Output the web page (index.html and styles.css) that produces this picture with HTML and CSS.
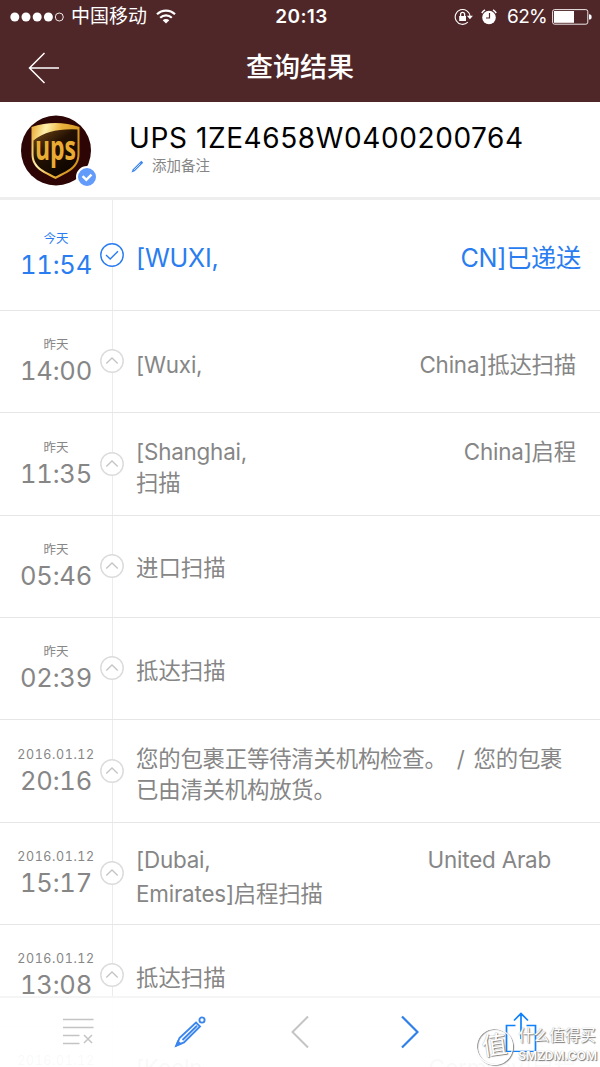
FILE: index.html
```html
<!DOCTYPE html>
<html lang="zh-CN">
<head>
  <meta charset="UTF-8" />
  <meta name="viewport" content="width=device-width, initial-scale=1.0"/>
  <title>查询结果</title>
  <link rel="stylesheet" href="styles.css">
</head>
<body>
  <svg class="defs" width="0" height="0">
    <symbol id="icon-up" viewBox="0 0 24 24">
      <circle cx="12" cy="12" r="11.2" fill="#fff" stroke="#dcdcdc" stroke-width="1.5"/>
      <path d="M6.300 14.500L12 9l5.700 5.500" fill="none" stroke="#c4c4c4" stroke-width="1.300"/>
    </symbol>
    <symbol id="icon-check" viewBox="0 0 24 24">
      <circle cx="12" cy="12" r="11.2" fill="#fff" stroke="#2a7df0" stroke-width="1.400"/>
      <path d="M6 12l4.200 4L18 8.200" fill="none" stroke="#2a7df0" stroke-width="1.400"/>
    </symbol>
  </svg>

  <header>
    <div class="status-bar">
      <div class="status-left">
        <svg width="54" height="10" viewBox="0 0 54 10" fill="#fff">
          <circle cx="4.800" cy="5" r="4.500"/>
          <circle cx="16" cy="5" r="4.500"/>
          <circle cx="27.200" cy="5" r="4.500"/>
          <circle cx="38.400" cy="5" r="4.500"/>
          <circle cx="49.300" cy="5" r="4" fill="none" stroke="#fff" stroke-width="0.9"/>
        </svg>
        <span class="carrier">中国移动</span>
        <svg class="wifi" width="20" height="15" viewBox="0 0 20 15" fill="none" stroke="#fff" stroke-width="2.200">
          <path d="M1 5.300a12.800 12.800 0 0 1 18 0"/>
          <path d="M4.200 8.700a8.300 8.300 0 0 1 11.600 0"/>
          <path d="M10 14.600L6.700 11.300a4.700 4.700 0 0 1 6.600 0z" fill="#fff" stroke="none"/>
        </svg>
      </div>
      <div class="clock">20:13</div>
      <div class="status-right">
        <svg width="19" height="18" viewBox="0 0 19 18" fill="none" stroke="#fff" stroke-width="1.100">
          <path d="M13.800 14.200A7.400 7.400 0 1 1 16 8.500"/>
          <path d="M12.900 7.700h6l-3 3.600z" fill="#fff" stroke="none"/>
          <rect x="5.200" y="8" width="6.800" height="5" fill="#fff" stroke="none"/>
          <path d="M6.600 8V6.300a2 2 0 0 1 4 0V8" stroke-width="1.300"/>
        </svg>
        <svg class="alarm" width="16" height="16" viewBox="0 0 16 16" fill="none" stroke="#fff">
          <circle cx="8" cy="8.500" r="6.800" fill="#fff" stroke="none"/>
          <path d="M0.800 4A9 9 0 0 1 4 .9M12 .9A9 9 0 0 1 15.200 4" stroke-width="1.500"/>
          <path d="M8.500 4v5H5" stroke="#4f2729" stroke-width="1.200"/>
        </svg>
        <span class="percent">62%</span>
        <svg width="40" height="16" viewBox="0 0 40 16">
          <rect x="0.600" y="0.600" width="35.200" height="14.600" rx="2" fill="none" stroke="#fff" stroke-width="0.900"/>
          <rect x="2" y="2" width="20" height="11.800" fill="#fff"/>
          <path d="M37 5.300a2.600 2.600 0 0 1 0 5.300z" fill="#fff"/>
        </svg>
      </div>
    </div>
    <div class="title-bar">
      <svg class="back" width="32" height="32" viewBox="0 0 32 32" fill="none" stroke="#fff" stroke-width="1.500">
        <path d="M16.500 1L1.500 16l15 15M1.500 16H31"/>
      </svg>
      <h1>查询结果</h1>
    </div>
  </header>

  <section class="parcel">
    <div class="parcel-logo">
      <svg width="70" height="71" viewBox="0 0 70 71">
        <defs>
          <linearGradient id="gold" x1="0" y1="0" x2="1" y2="0.300">
            <stop offset="0" stop-color="#e7a52b"/>
            <stop offset="0.300" stop-color="#fff0ac"/>
            <stop offset="0.600" stop-color="#e9b13c"/>
            <stop offset="1" stop-color="#d3941d"/>
          </linearGradient>
          <linearGradient id="brown" x1="0" y1="0" x2="0.700" y2="1">
            <stop offset="0" stop-color="#7a4d17"/>
            <stop offset="0.450" stop-color="#241103"/>
            <stop offset="1" stop-color="#0c0500"/>
          </linearGradient>
        </defs>
        <circle cx="35" cy="35.500" r="35" fill="#2d0505"/>
        <path d="M10.500 12Q34.500 4 58.500 12V39C58.500 53 48 57 34.500 64C21 57 10.500 53 10.500 39z" fill="url(#gold)"/>
        <path d="M12.500 25.500Q28 13 56.500 14.500V39C56.500 51.500 46.500 55.500 34.500 61.500C22.500 55.500 12.500 51.500 12.500 39z" fill="url(#brown)"/>
        <text x="14" y="45" textLength="41" lengthAdjust="spacingAndGlyphs" class="logo-text">ups</text>
      </svg>
      <svg class="verified" width="22" height="22" viewBox="0 0 22 22">
        <circle cx="11" cy="11" r="10" fill="#639bfb" stroke="#fff" stroke-width="2"/>
        <path d="M6.600 10.200l3.700 3.700 5.200-5.200" fill="none" stroke="#fff" stroke-width="2.400"/>
      </svg>
    </div>
    <div class="parcel-info">
      <div class="parcel-number">UPS 1ZE4658W0400200764</div>
      <div class="parcel-note">
        <svg width="13" height="13" viewBox="0 0 13 13">
          <path d="M.5 12.500L1.800 9.300 10.300.8l1.900 1.900L3.700 11.200z" fill="#3b86ee"/>
          <path d="M2.900 10.100L9.300 3.700" stroke="#fff" stroke-width="0.700"/>
        </svg>
        <span>添加备注</span>
      </div>
    </div>
  </section>

  <main class="timeline">
    <div class="event latest">
      <div class="when"><span class="day">今天</span><span class="time">11:54</span></div>
      <svg class="node"><use href="#icon-check"/></svg>
      <div class="message"><div class="split"><span>[WUXI,</span><span>CN]已递送</span></div></div>
    </div>
    <div class="event">
      <div class="when"><span class="day">昨天</span><span class="time">14:00</span></div>
      <svg class="node"><use href="#icon-up"/></svg>
      <div class="message"><div class="split"><span>[Wuxi,</span><span>China]抵达扫描</span></div></div>
    </div>
    <div class="event">
      <div class="when"><span class="day">昨天</span><span class="time">11:35</span></div>
      <svg class="node"><use href="#icon-up"/></svg>
      <div class="message"><div class="split"><span>[Shanghai,</span><span>China]启程</span></div><div>扫描</div></div>
    </div>
    <div class="event">
      <div class="when"><span class="day">昨天</span><span class="time">05:46</span></div>
      <svg class="node"><use href="#icon-up"/></svg>
      <div class="message single">进口扫描</div>
    </div>
    <div class="event">
      <div class="when"><span class="day">昨天</span><span class="time">02:39</span></div>
      <svg class="node"><use href="#icon-up"/></svg>
      <div class="message single">抵达扫描</div>
    </div>
    <div class="event">
      <div class="when"><span class="day date">2016.01.12</span><span class="time">20:16</span></div>
      <svg class="node"><use href="#icon-up"/></svg>
      <div class="message"><div>您的包裹正等待清关机构检查。<span class="slash">/</span>您的包裹</div><div>已由清关机构放货。</div></div>
    </div>
    <div class="event">
      <div class="when"><span class="day date">2016.01.12</span><span class="time">15:17</span></div>
      <svg class="node"><use href="#icon-up"/></svg>
      <div class="message loose"><div class="split short"><span>[Dubai,</span><span>United Arab</span></div><div>Emirates]启程扫描</div></div>
    </div>
    <div class="event">
      <div class="when"><span class="day date">2016.01.12</span><span class="time">13:08</span></div>
      <svg class="node"><use href="#icon-up"/></svg>
      <div class="message single">抵达扫描</div>
    </div>
    <div class="event last">
      <div class="when"><span class="day date">2016.01.12</span></div>
      <div class="message"><div class="split"><span>[Koeln,</span><span>Germany]启程</span></div></div>
    </div>
  </main>

  <nav class="toolbar">
    <svg class="list" width="32" height="28" viewBox="0 0 32 28" fill="none" stroke="#c4c4c4" stroke-width="1.500">
      <path d="M1 1.500H31.500M1 9.500H31.500M1 17.500H17.500M1 25.500H17.500M22 17l8 8M30 17l-8 8"/>
    </svg>
    <svg class="pencil" width="32" height="32" viewBox="0 0 32 32" fill="none" stroke="#3b86ee" stroke-width="1.900">
      <path d="M2.500 29.500l3-7.500L22 6.500l4 4L10 26.500zM8.500 24L23 9.800"/>
      <circle cx="28" cy="4" r="2.600"/>
      <path d="M.5 31.500l3-7.500 4.500 4z" fill="#3b86ee" stroke="none"/>
    </svg>
    <svg class="prev" width="18" height="34" viewBox="0 0 18 34" fill="none" stroke="#c4c4c4" stroke-width="2">
      <path d="M17 1.500L1.500 17 17 32.500"/>
    </svg>
    <svg class="next" width="18" height="34" viewBox="0 0 18 34" fill="none" stroke="#2f80ea" stroke-width="2.200">
      <path d="M1 1.500L16.500 17 1 32.500"/>
    </svg>
    <svg class="share" width="32" height="40" viewBox="0 0 32 40" fill="none" stroke="#1181fb" stroke-width="1.700">
      <path d="M10.500 13.500H1.500v26h29v-26h-9M16 27V1.500M9 8.500l7-7 7 7"/>
    </svg>
  </nav>

  <div class="watermark">
    <span class="seal">值</span>
    <div class="mark-text"><span>什么值得买</span><span class="domain">SMZDM.COM</span></div>
  </div>
</body>
</html>
```
FILE: styles.css
```css
html, body {
  margin: 0;
  padding: 0;
  height: 100%;
  overflow: hidden;
}

body {
  position: relative;
  background: #fff;
  font-family: Inter, 'Noto Sans CJK SC', sans-serif;
  color: #868686;
}

* {
  box-sizing: border-box;
}

svg {
  display: block;
  flex: none;
}

.defs {
  position: absolute;
}

/* Header */
header {
  height: 102px;
  background: #4f2729;
  color: #fff;
}
.status-bar {
  display: grid;
  grid-template-columns: 1fr auto 1fr;
  align-items: center;
  height: 33px;
  padding: 0 8px 0 10px;
}
.status-left, .status-right {
  display: flex;
  align-items: center;
}
.status-right {
  justify-content: flex-end;
}
.carrier {
  margin-left: 7px;
  font-size: 19px;
  line-height: 30px;
}
.wifi {
  margin-left: 9px;
}
.clock {
  padding-left: 1px;
  font-size: 19px;
  font-weight: 600;
  letter-spacing: 0.4px;
}
.alarm {
  margin-left: 8px;
}
.percent {
  margin: 0 5px 0 10px;
  font-size: 19px;
  letter-spacing: -0.7px;
}
.title-bar {
  display: flex;
  align-items: center;
  height: 69px;
  padding: 0 28px;
}
.title-bar h1 {
  flex: 1;
  margin: 0 32px 0 0;
  font-size: 27px;
  font-weight: 500;
  line-height: 40px;
  text-align: center;
}

/* Parcel summary */
.parcel {
  display: flex;
  height: 98px;
  padding: 13px 0 0 21px;
  border-bottom: 3px solid #eee;
}
.parcel-logo {
  position: relative;
  width: 70px;
  height: 71px;
}
.logo-text {
  font-family: 'Open Sans', sans-serif;
  font-size: 34px;
  font-weight: 700;
  fill: #e9ab33;
}
.verified {
  position: absolute;
  left: 55px;
  top: 51px;
}
.parcel-info {
  margin-left: 38px;
}
.parcel-number {
  margin-top: 4px;
  font-size: 28px;
  line-height: 38px;
  letter-spacing: 0.6px;
  color: #000;
  white-space: nowrap;
}
.parcel-note {
  display: flex;
  align-items: center;
  gap: 8px;
  margin-left: 2px;
  font-size: 14.5px;
  line-height: 18px;
}

/* Tracking timeline */
.event {
  display: flex;
  align-items: center;
  height: 102.35px;
  padding-top: 4px;
  border-bottom: 1px solid #e6e6e6;
  background: linear-gradient(#ececec, #ececec) 112px 0 / 1px 100% no-repeat;
}
.event.latest {
  height: 111px;
  color: #2a7df0;
}
.when {
  display: flex;
  flex-direction: column;
  align-items: center;
  width: 100px;
  margin-bottom: 5px;
  padding-left: 12px;
}
.day {
  font-size: 12.5px;
  line-height: 18px;
}
.date {
  font-size: 12.500px;
  letter-spacing: 0.600px;
  font-variant-numeric: tabular-nums;
}
.time {
  margin-top: 2px;
  font-size: 25.500px;
  line-height: 30px;
  letter-spacing: -0.2px;
  font-variant-numeric: tabular-nums;
}
.node {
  width: 24px;
  height: 24px;
  margin-bottom: 5px;
}
.message {
  flex: 1;
  padding: 2px 24px 0 12px;
  font-size: 22.400px;
  line-height: 31px;
  letter-spacing: -0.200px;
  white-space: nowrap;
}
.latest .message {
  padding-right: 19px;
  font-size: 25.200px;
  letter-spacing: -0.25px;
}
.single {
  padding-top: 0;
  padding-bottom: 1px;
  letter-spacing: 0;
}
.loose {
  padding-top: 3px;
  line-height: 34px;
}
.split {
  display: flex;
  justify-content: space-between;
}
.split.short {
  padding-right: 25px;
}
.slash {
  margin: 0 9px 0 10px;
}
/* only the top of this row shows through the toolbar */
.event.last {
  align-items: flex-start;
  height: 40px;
  padding-top: 25px;
  border: 0;
}
.last .message {
  padding: 0 24px 0 36px;
}

/* Bottom toolbar, lies over the list */
.toolbar {
  position: absolute;
  left: 0;
  right: 0;
  bottom: 0;
  height: 71px;
  display: flex;
  align-items: center;
  padding: 0 0 1px 62px;
  border-top: 2px solid #f5f5f5;
  background: rgba(255, 255, 255, 0.95);
}
.pencil {
  margin-left: 80px;
}
.prev {
  margin-left: 85px;
}
.next {
  margin-left: 92px;
}
.share {
  margin-left: 86px;
}

.watermark {
  position: absolute;
  right: 3px;
  bottom: 1px;
  display: flex;
  align-items: center;
  gap: 5px;
  color: #fff;
  text-shadow: 1px 1px 1px #777, 0 0 1px #999;
}
.seal {
  width: 37px;
  height: 37px;
  border: 1.500px solid #fff;
  border-radius: 50%;
  box-shadow: 1px 1px 1px #888, inset 1px 1px 1px #999;
  font-size: 25px;
  line-height: 33px;
  text-align: center;
  transform: rotate(-8deg);
}
.mark-text {
  display: flex;
  flex-direction: column;
  font-size: 15.500px;
  line-height: 20px;
}
.domain {
  font-size: 12px;
  font-weight: 600;
}
```
